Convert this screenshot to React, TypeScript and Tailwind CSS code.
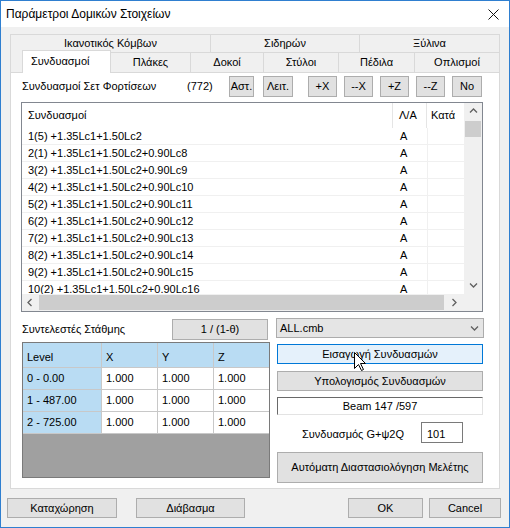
import type { ReactElement, ReactNode } from "react";

const COMBOS = [
  "1(5) +1.35Lc1+1.50Lc2",
  "2(1) +1.35Lc1+1.50Lc2+0.90Lc8",
  "3(2) +1.35Lc1+1.50Lc2+0.90Lc9",
  "4(2) +1.35Lc1+1.50Lc2+0.90Lc10",
  "5(2) +1.35Lc1+1.50Lc2+0.90Lc11",
  "6(2) +1.35Lc1+1.50Lc2+0.90Lc12",
  "7(2) +1.35Lc1+1.50Lc2+0.90Lc13",
  "8(2) +1.35Lc1+1.50Lc2+0.90Lc14",
  "9(2) +1.35Lc1+1.50Lc2+0.90Lc15",
  "10(2) +1.35Lc1+1.50Lc2+0.90Lc16",
];

const LEVELS = ["0 - 0.00", "1 - 487.00", "2 - 725.00"];

function Btn({ className, children }: { className: string; children: ReactNode }): ReactElement {
  return (
    <div
      className={
        "flex shrink-0 items-center justify-center border border-[#adadad] bg-[#e1e1e1] text-[11px] text-black " +
        className
      }
    >
      {children}
    </div>
  );
}

function Chevron({ dir }: { dir: "up" | "down" | "left" | "right" }): ReactElement {
  const d = {
    up: "M1 5.5 L4.5 2 L8 5.5",
    down: "M1 2.5 L4.5 6 L8 2.5",
    left: "M5.5 1 L2 4.5 L5.5 8",
    right: "M2.5 1 L6 4.5 L2.5 8",
  }[dir];
  return (
    <svg width="9" height="9" viewBox="0 0 9 9" fill="none">
      <path d={d} stroke="#606060" strokeWidth="1.3" />
    </svg>
  );
}

function Tab({ className, children }: { className: string; children: ReactNode }): ReactElement {
  return (
    <div
      className={
        "flex shrink-0 items-center justify-center border-l border-t border-[#d9d9d9] text-[11px] text-black " +
        className
      }
    >
      {children}
    </div>
  );
}

export default function App(): ReactElement {
  return (
    <div className="relative flex h-[528px] w-[510px] flex-col border border-[#2f7fd0] bg-[#f0f0f0] font-['Liberation_Sans',sans-serif] text-black">
      {/* title bar */}
      <div className="flex h-[26px] shrink-0 items-center justify-between bg-white pl-[5px] pr-[10px]">
        <span className="text-[12px]">Παράμετροι Δομικών Στοιχείων</span>
        <svg width="11" height="11" viewBox="0 0 11 11">
          <path d="M0.5 0.5 L10.5 10.5 M10.5 0.5 L0.5 10.5" stroke="#111" strokeWidth="1" />
        </svg>
      </div>

      {/* tabs */}
      <div className="ml-[9px] mt-[7px] flex w-[490px] flex-col">
        <div className="flex h-[18px]">
          <Tab className="w-[200px]">Ικανοτικός Κόμβων</Tab>
          <Tab className="w-[149px]">Σιδηρών</Tab>
          <Tab className="w-[141px] border-r">Ξύλινα</Tab>
        </div>
        <div className="flex h-[20px] items-end">
          <div className="h-full w-[12px] border-l border-[#d9d9d9]" />
          <div className="relative top-[1px] z-10 flex h-[23px] w-[89px] items-center border-x border-t border-[#d9d9d9] bg-white pb-[2px] pl-[8px] text-[11px]">
            Συνδυασμοί
          </div>
          <Tab className="h-full w-[79px] border-l-0">Πλάκες</Tab>
          <Tab className="h-full w-[73px]">Δοκοί</Tab>
          <Tab className="h-full w-[75px]">Στύλοι</Tab>
          <Tab className="h-full w-[76px]">Πέδιλα</Tab>
          <Tab className="h-full w-[86px] border-r">Οπλισμοί</Tab>
        </div>

        {/* tab page */}
        <div className="flex h-[417px] flex-col border border-[#d9d9d9] bg-white text-[11px]">
          <div className="mt-[3px] flex h-[21px] items-center">
            <span className="ml-[11px] w-[165px]">Συνδυασμοί Σετ Φορτίσεων</span>
            <span className="w-[42px]">(772)</span>
            <Btn className="h-full w-[25px]">Αστ.</Btn>
            <Btn className="ml-[9px] h-full w-[30px]">Λειτ.</Btn>
            <Btn className="ml-[15px] h-full w-[29px]">+X</Btn>
            <Btn className="ml-[7px] h-full w-[29px]">--X</Btn>
            <Btn className="ml-[7px] h-full w-[29px]">+Z</Btn>
            <Btn className="ml-[7px] h-full w-[29px]">--Z</Btn>
            <Btn className="ml-[7px] h-full w-[30px]">No</Btn>
          </div>

          {/* list view */}
          <div className="ml-[10px] mt-[5px] flex h-[210px] w-[462px] flex-col border border-[#828790] bg-white">
            <div className="flex h-[191px]">
              <div className="flex w-[442px] flex-col">
                <div className="flex h-[25px] shrink-0">
                  <div className="flex w-[371px] items-center border-r border-[#e5e5e5] pl-[6px]">Συνδυασμοί</div>
                  <div className="flex w-[34px] items-center border-r border-[#e5e5e5] pl-[6px]">Λ/Α</div>
                  <div className="flex w-[37px] items-center pl-[4px]">Κατά</div>
                </div>
                <div className="h-[166px] overflow-hidden">
                  {COMBOS.map((c) => (
                    <div key={c} className="flex h-[17px] border-b border-[#f0f0f0]">
                      <div className="flex w-[371px] items-center pl-[6px]">{c}</div>
                      <div className="flex w-[34px] items-center pl-[7px]">A</div>
                      <div className="w-[37px] border-l border-[#f0f0f0]" />
                    </div>
                  ))}
                </div>
              </div>
              <div className="flex w-[18px] flex-col bg-[#f0f0f0]">
                <div className="flex h-[17px] items-center justify-center">
                  <Chevron dir="up" />
                </div>
                <div className="mx-[1px] mt-[1px] h-[16px] bg-[#cdcdcd]" />
                <div className="mt-auto flex h-[17px] items-center justify-center">
                  <Chevron dir="down" />
                </div>
              </div>
            </div>
            <div className="flex h-[17px] bg-[#f0f0f0]">
              <div className="flex w-[17px] items-center justify-center">
                <Chevron dir="left" />
              </div>
              <div className="my-[1px] w-[405px] bg-[#cdcdcd]" />
              <div className="ml-[2px] flex w-[17px] items-center justify-center">
                <Chevron dir="right" />
              </div>
              <div className="w-[18px] bg-[#f0f0f0]" />
            </div>
          </div>

          {/* lower area */}
          <div className="mt-[6px] flex items-start">
            <div className="ml-[11px] flex w-[248px] flex-col pt-[1px]">
              <div className="flex h-[21px] items-center">
                <span className="w-[150px]">Συντελεστές Στάθμης</span>
                <Btn className="h-full w-[96px]">1 / (1-θ)</Btn>
              </div>
              <div className="mt-[2px] flex h-[136px] w-[248px] flex-col border border-[#7a7a7a] bg-[#a0a0a0]">
                <div className="flex h-[25px] border-b border-[#c8c8c8] bg-[#b9dcf3]">
                  <div className="flex w-[79px] items-center border-r border-[#c8c8c8] pl-[4px] pt-[4px]">Level</div>
                  <div className="flex w-[56px] items-center border-r border-[#c8c8c8] pl-[4px] pt-[4px]">X</div>
                  <div className="flex w-[56px] items-center border-r border-[#c8c8c8] pl-[4px] pt-[4px]">Y</div>
                  <div className="flex w-[55px] items-center pl-[4px] pt-[4px]">Z</div>
                </div>
                {LEVELS.map((l) => (
                  <div key={l} className="flex h-[22px] border-b border-[#c8c8c8]">
                    <div className="flex w-[79px] items-center border-r border-[#c8c8c8] bg-[#b9dcf3] pl-[4px]">{l}</div>
                    <div className="flex w-[56px] items-center border-r border-[#c8c8c8] bg-white pl-[4px]">1.000</div>
                    <div className="flex w-[56px] items-center border-r border-[#c8c8c8] bg-white pl-[4px]">1.000</div>
                    <div className="flex w-[55px] items-center bg-white pl-[4px]">1.000</div>
                  </div>
                ))}
              </div>
            </div>

            <div className="ml-[6px] flex w-[208px] flex-col">
              <div className="flex h-[20px] items-center justify-between border border-[#acacac] bg-[#e5e5e5] pl-[3px] pr-[4px]">
                <span>ALL.cmb</span>
                <Chevron dir="down" />
              </div>
              <div className="ml-[1px] mt-[6px] flex h-[20px] w-[206px] items-center justify-center border border-[#0078d7] bg-[#e5f1fb]">
                Εισαγωγή Συνδυασμών
              </div>
              <Btn className="ml-[1px] mt-[7px] h-[20px] w-[206px]">Υπολογισμός Συνδυασμών</Btn>
              <div className="ml-[1px] mt-[6px] flex h-[18px] w-[206px] items-center justify-center border-l border-t border-b border-r border-b-[#e3e3e3] border-l-[#696969] border-r-[#e3e3e3] border-t-[#696969] bg-white">
                Beam 147 /597
              </div>
              <div className="mt-[7px] flex h-[21px] items-center">
                <span className="w-[145px] pl-[9px] pt-[4px] text-center">Συνδυασμός G+ψ2Q</span>
                <div className="flex h-full w-[42px] items-start border border-[#7a7a7a] bg-white pl-[5px] pt-[3px]">101</div>
              </div>
              <Btn className="ml-[1px] mt-[9px] h-[31px] w-[206px]">Αυτόματη Διαστασιολόγηση Μελέτης</Btn>
            </div>
          </div>
        </div>
      </div>

      {/* bottom buttons */}
      <div className="mt-[9px] flex h-[20px]">
        <Btn className="ml-[6px] h-full w-[110px]">Καταχώρηση</Btn>
        <Btn className="ml-[19px] h-full w-[109px]">Διάβασμα</Btn>
        <Btn className="ml-[103px] h-full w-[75px]">OK</Btn>
        <Btn className="ml-[6px] h-full w-[72px]">Cancel</Btn>
      </div>

      {/* mouse pointer */}
      <svg className="absolute left-[353px] top-[351px] z-20" width="13" height="20" viewBox="0 0 13 20">
        <path d="M0.5 0.5 L0.5 16.5 L4.5 12.5 L7.5 18.5 L9.5 17.5 L6.5 11.5 L11.5 11.5 Z" fill="#fff" stroke="#000" strokeWidth="1" />
      </svg>
    </div>
  );
}
